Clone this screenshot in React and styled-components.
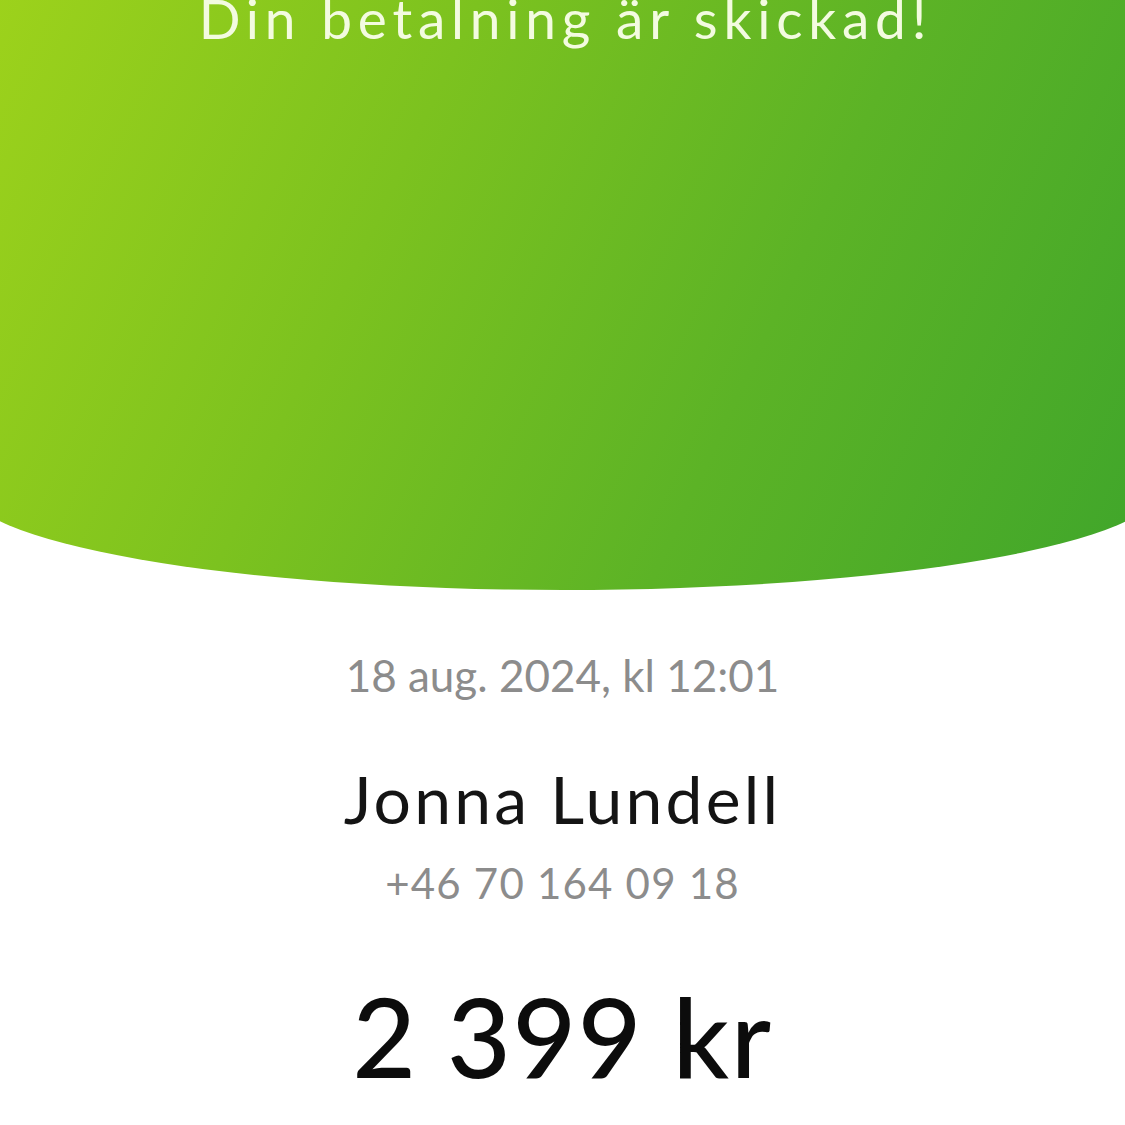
import React from "react"
import styled, { createGlobalStyle } from "styled-components"

const GlobalStyle = createGlobalStyle`
  html, body {
    margin: 0;
    padding: 0;
    background: #ffffff;
  }
  body {
    font-family: Lato, "Open Sans", "Liberation Sans", sans-serif;
    -webkit-font-smoothing: antialiased;
  }
`

function App() {
  return (
    <Page>
      <GlobalStyle />
      <HeroClip>
        <Hero>
          <Title>Din betalning är skickad!</Title>
        </Hero>
      </HeroClip>
      <Receipt>
        <DateLine>18 aug. 2024, kl 12:01</DateLine>
        <Recipient>Jonna Lundell</Recipient>
        <Phone>+46 70 164 09 18</Phone>
        <Amount>2 399 kr</Amount>
      </Receipt>
    </Page>
  )
}

export default App

const Page = styled.div`
  width: 1125px;
  height: 1125px;
  overflow: hidden;
  background: #ffffff;
`
const HeroClip = styled.div`
  width: 100%;
  overflow: hidden;
`
const Hero = styled.div`
  width: 1200px;
  height: 590px;
  margin-left: -37.5px;
  background: linear-gradient(115deg, #9fd31b 0%, #7cc21f 35%, #5cb326 65%, #3ea52b 100%);
  border-bottom-left-radius: 600px 105px;
  border-bottom-right-radius: 600px 105px;
  display: flex;
  justify-content: center;
`
const Title = styled.h1`
  margin: -9px 0 0;
  padding-left: 6px;
  font-size: 55px;
  line-height: 1;
  font-weight: 400;
  color: #f3fbe0;
  letter-spacing: 5.8px;
  white-space: nowrap;
`
const Receipt = styled.div`
  display: flex;
  flex-direction: column;
  align-items: center;
  padding-top: 63px;
`
const Line = styled.div`
  line-height: 1;
  white-space: nowrap;
`
const DateLine = styled(Line)`
  font-size: 44px;
  color: #8c8c8c;
`
const Recipient = styled(Line)`
  margin-top: 69px;
  font-size: 66px;
  color: #141414;
  letter-spacing: 3.2px;
`
const Phone = styled(Line)`
  margin-top: 30px;
  font-size: 42px;
  color: #8c8c8c;
  letter-spacing: 1.2px;
`
const Amount = styled(Line)`
  margin-top: 76px;
  font-size: 110px;
  font-weight: 500;
  color: #0c0c0c;
  letter-spacing: 1.6px;
`
